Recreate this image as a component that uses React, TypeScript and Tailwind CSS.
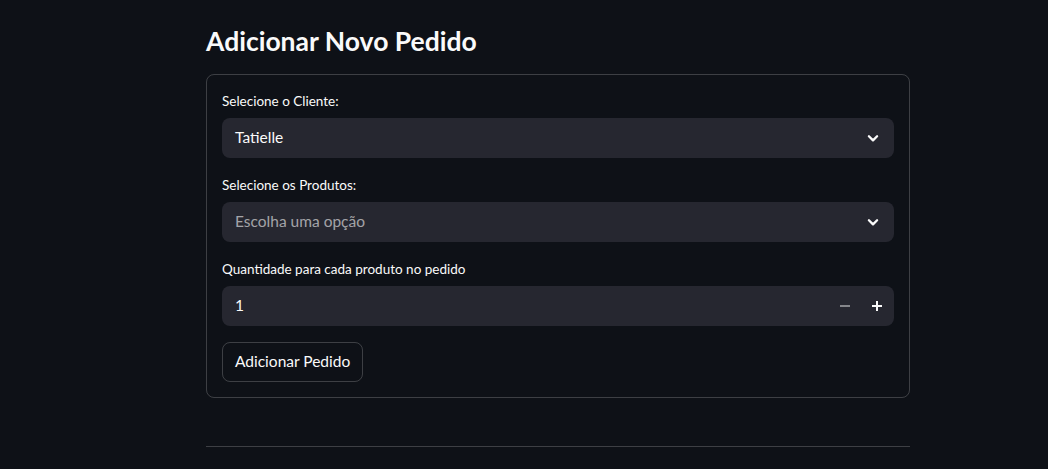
import React from "react";

const Chevron = () => (
  <svg width="14" height="14" viewBox="0 0 24 24" fill="none" stroke="#fafafa" strokeWidth="4" strokeLinecap="round" strokeLinejoin="round">
    <path d="M5 9l7 7 7-7" />
  </svg>
);

const SelectBox = ({ value, placeholder }: { value?: string; placeholder?: string }) => (
  <div className="flex h-[40px] items-center justify-between rounded-lg bg-[#262730] pl-[13px] pr-[14px]">
    {value ? (
      <span className="text-[15.5px] text-[#fafafa]">{value}</span>
    ) : (
      <span className="text-[15.5px] text-[rgba(250,250,250,0.6)]">{placeholder}</span>
    )}
    <Chevron />
  </div>
);

const Label = ({ children }: { children: React.ReactNode }) => (
  <div className="mb-[6px] flex h-[22px] items-center text-[13.5px] text-[#fafafa]">{children}</div>
);

const App = () => {
  return (
    <div
      className="min-h-[469px] bg-[#0e1117] text-[#fafafa]"
      style={{ fontFamily: "Lato, 'Liberation Sans', sans-serif" }}
    >
      <div className="ml-[206px] w-[704px] pt-[23px]">
        <h3 className="mb-[15px] h-[36px] text-[26.5px] leading-[36px] font-bold">Adicionar Novo Pedido</h3>

        <div className="rounded-lg border border-[rgba(250,250,250,0.2)] px-[15px] pt-[15px] pb-[15px]">
          <Label>Selecione o Cliente:</Label>
          <SelectBox value="Tatielle" />

          <div className="mt-[16px]">
            <Label>Selecione os Produtos:</Label>
            <SelectBox placeholder="Escolha uma opção" />
          </div>

          <div className="mt-[16px]">
            <Label>Quantidade para cada produto no pedido</Label>
            <div className="flex h-[40px] items-center justify-between rounded-lg bg-[#262730] pl-[13px] pr-[1px]">
              <span className="text-[15.5px] text-[#fafafa]">1</span>
              <div className="flex h-full items-center">
                <button className="flex h-full w-[32px] items-center justify-center">
                  <svg width="10" height="10" viewBox="0 0 10 10">
                    <rect x="0" y="4" width="10" height="2" fill="rgba(250,250,250,0.45)" />
                  </svg>
                </button>
                <button className="flex h-full w-[32px] items-center justify-center">
                  <svg width="10" height="10" viewBox="0 0 10 10">
                    <rect x="0" y="4" width="10" height="2" fill="#fafafa" />
                    <rect x="4" y="0" width="2" height="10" fill="#fafafa" />
                  </svg>
                </button>
              </div>
            </div>
          </div>

          <button className="mt-[16px] flex h-[40px] items-center rounded-lg border border-[rgba(250,250,250,0.2)] px-[12px] text-[15.5px] text-[#fafafa]">
            Adicionar Pedido
          </button>
        </div>

        <hr className="mt-[48px] border-0 border-t border-[rgba(250,250,250,0.2)]" />
      </div>
    </div>
  );
};

export default App;
